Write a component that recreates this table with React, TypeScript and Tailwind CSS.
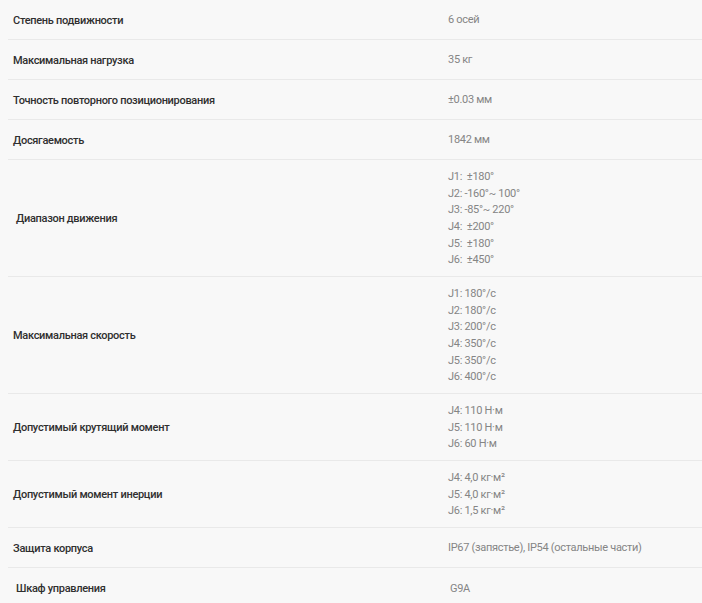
import React from "react";

type Spec = {
  label: string;
  values: string[];
  labelShift?: boolean;
  valueShift?: boolean;
};

const specs: Spec[] = [
  { label: "Степень подвижности", values: ["6 осей"] },
  { label: "Максимальная нагрузка", values: ["35 кг"] },
  { label: "Точность повторного позиционирования", values: ["±0.03 мм"] },
  { label: "Досягаемость", values: ["1842 мм"] },
  {
    label: "Диапазон движения",
    labelShift: true,
    values: ["J1:  ±180°", "J2: -160°~ 100°", "J3: -85°~ 220°", "J4:  ±200°", "J5:  ±180°", "J6:  ±450°"],
  },
  {
    label: "Максимальная скорость",
    values: ["J1: 180°/с", "J2: 180°/с", "J3: 200°/с", "J4: 350°/с", "J5: 350°/с", "J6: 400°/с"],
  },
  { label: "Допустимый крутящий момент", values: ["J4: 110 Н·м", "J5: 110 Н·м", "J6: 60 Н·м"] },
  { label: "Допустимый момент инерции", values: ["J4: 4,0 кг·м²", "J5: 4,0 кг·м²", "J6: 1,5 кг·м²"] },
  { label: "Защита корпуса", values: ["IP67 (запястье), IP54 (остальные части)"] },
  { label: "Шкаф управления", values: ["G9A"], labelShift: true, valueShift: true },
];

const App = () => {
  return (
    <div className="min-h-[603px] w-full bg-[#f8f8f8] pl-2 font-['Roboto',sans-serif] tracking-[-0.3px]">
      {specs.map((spec, i) => (
        <div
          key={i}
          className={`flex min-h-[40px] items-stretch ${i < specs.length - 1 ? "border-b border-[#e9e9e9]" : ""}`}
        >
          {/* label column */}
          <div
            className={`flex w-[435px] shrink-0 items-center pt-[3px] text-[11px] font-medium text-[#2f2f2f] ${
              spec.labelShift ? "pl-2" : "pl-[5px]"
            }`}
          >
            {spec.label}
          </div>
          {/* value column */}
          <div
            className={`flex flex-col justify-center pt-[9px] pb-[7px] text-[11px] leading-[16.67px] text-[#858585] whitespace-pre ${
              spec.valueShift ? "pl-[7px]" : "pl-[5px]"
            }`}
          >
            {spec.values.map((v, j) => (
              <span key={j}>{v}</span>
            ))}
          </div>
        </div>
      ))}
    </div>
  );
};

export default App;
